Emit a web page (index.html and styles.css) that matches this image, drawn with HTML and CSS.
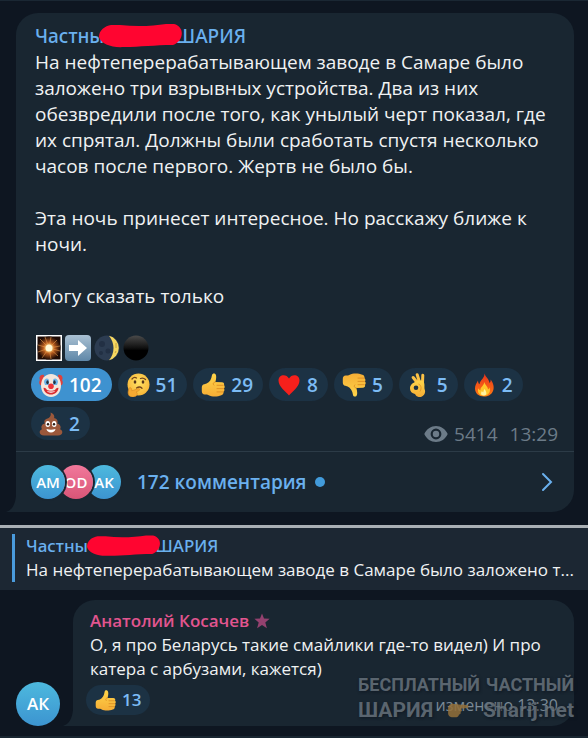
FILE: index.html
```html
<!DOCTYPE html>
<html lang="ru">
<head>
<meta charset="utf-8">
<meta name="viewport" content="width=device-width, initial-scale=1">
<title>Частный ШАРИЯ</title>
<link rel="stylesheet" href="styles.css">
</head>
<body>
<svg class="defs" aria-hidden="true">
  <defs>
    <linearGradient id="skin" x1="0" y1="0" x2="0" y2="1"><stop offset="0" stop-color="#ffd54a"/><stop offset="1" stop-color="#f5ad35"/></linearGradient>
    <radialGradient id="face" cx=".5" cy=".4" r=".6"><stop offset="0" stop-color="#ffe266"/><stop offset="1" stop-color="#f8b637"/></radialGradient>
    <radialGradient id="burst"><stop offset="0" stop-color="#fffbe0"/><stop offset=".22" stop-color="#ffd27a"/><stop offset=".5" stop-color="#b5591c"/><stop offset="1" stop-color="#1d0a05"/></radialGradient>
    <linearGradient id="steel" x1="0" y1="0" x2="0" y2="1"><stop offset="0" stop-color="#a9c0d2"/><stop offset="1" stop-color="#5f87a8"/></linearGradient>
    <linearGradient id="coal" x1="0" y1="0" x2="0" y2="1"><stop offset="0" stop-color="#4a4a4a"/><stop offset=".5" stop-color="#101010"/><stop offset=".6" stop-color="#000"/></linearGradient>
    <linearGradient id="flame" x1="0" y1="0" x2="0" y2="1"><stop offset="0" stop-color="#e8321c"/><stop offset="1" stop-color="#ff7a12"/></linearGradient>
    <symbol id="thumb" viewBox="0 0 24 24">
      <path fill="url(#skin)" d="M.8 14.500c0-2 1-3 2.500-3.200C6.500 10.800 9.300 8.500 10.300 5L11 2C11.400-.2 14.600-.2 15 2.300c.5 2.500 0 4.700-.7 6.700l6.700.2c1.700.1 2.600 1.500 1.900 2.900 1 .9 1.100 2.500.1 3.400.7 1.100.5 2.500-.5 3.200.3 1.700-.6 3.300-2.200 3.600-3.700 1.600-9.500 1.700-12.600 0-1.300-.8-2.500-.8-4-.8C1.800 21.500.8 20 .8 18z"/>
      <path fill="none" stroke="#d98720" stroke-width=".8" stroke-linecap="round" d="M14.300 9c-1.800.2-2.800 1.600-1.500 3.100M16 12.300h6.200M16 15.600h6.500M16 18.900h6"/>
    </symbol>
    <symbol id="star" viewBox="0 0 16 16"><path d="M8 .5l2 5 5.600.3-4.300 3.600 1.600 5.800L8 12l-4.900 3.200 1.600-5.800L.4 5.800 6 5.500z"/></symbol>
  </defs>
</svg>

<main class="chat">
  <article class="bubble post">
    <div class="post-body">
      <h1 class="author">
        <span>Частны</span>
        <svg class="scribble" viewBox="0 0 84 24" aria-hidden="true"><path d="M12 1h9c17 2 33 1 46-1h8c12 3 9 18-1 21-19 0-32 2-49 2-12 1-23-3-25-10C0 6 6 2 12 1z"/></svg>
        <span>ШАРИЯ</span>
      </h1>
      <p>На нефтеперерабатывающем заводе в Самаре было заложено три взрывных устройства. Два из них обезвредили после того, как унылый черт показал, где их спрятал. Должны были сработать спустя несколько часов после первого. Жертв не было бы.</p>
      <p>Эта ночь принесет интересное. Но расскажу ближе к ночи.</p>
      <p>Могу сказать только</p>
      <div class="emoji-line">
        <svg viewBox="0 0 26 26" aria-label="взрыв"><path fill="#fff" d="M0 0h26v26H0z"/><path fill="#1d0a05" d="M1.500 1.500h23v23h-23z"/><circle cx="13" cy="13" r="11.500" fill="url(#burst)"/><path stroke="#e89a4c" stroke-width=".6" d="M13 13L4 4m9 9l2-11m-2 11l8-8m-8 8l11-2m-11 2l9 8m-9-8l2 11m-2-11l-7 10m7-10L2 17m11-4L2 10m11 3L9 2m4 11l11 3"/><circle cx="13" cy="13" r="3.500" fill="#fff8d5"/></svg>
        <svg viewBox="0 0 26 26" aria-label="стрелка вправо"><rect width="26" height="26" rx="4" fill="url(#steel)"/><path fill="#fff" d="M4 10h9V5l9 8-9 8v-5H4z"/></svg>
        <svg viewBox="0 0 26 26" aria-label="луна"><circle cx="13" cy="13" r="12.500" fill="#2c3c51"/><path fill="#f7d75f" d="M15 .8a12.500 12.500 0 0 1 0 24.400c6-7 6-17 0-24.400z"/><g fill="#223044"><circle cx="8" cy="9" r="3"/><circle cx="14" cy="16" r="2.500"/><circle cx="7" cy="18" r="2"/></g><path fill="none" stroke="#b8933b" stroke-width=".8" d="M22 8v5m-1 5l1-2"/></svg>
        <svg viewBox="0 0 26 26" aria-label="чёрный круг"><circle cx="13" cy="13" r="12.500" fill="url(#coal)"/></svg>
      </div>
      <div class="footer">
        <button class="pill active" type="button">
          <svg viewBox="0 0 24 24" aria-hidden="true"><path fill="#e0413b" d="M5 2C1 1-.5 5 1 7c-2 3 0 6 3 6zm14 0c4-1 5.500 3 4 5 2 3 0 6-3 6z"/><path fill="#f3e6dc" d="M12 1c6 0 10 5 10 11.500S18 24 12 24 2 19 2 12.500 6 1 12 1z"/><path fill="#6db6ec" d="M5 9c0-4 5-5 5-1v4H6zm14 0c0-4-5-5-5-1v4h4z"/><ellipse cx="8.500" cy="9.300" rx="1.200" ry="2" fill="#26303b"/><ellipse cx="15.500" cy="9.300" rx="1.200" ry="2" fill="#26303b"/><path fill="#d92e31" d="M4.500 15c1-.5 2.500.5 3.500 2 2 1 6 1 8 0 1-1.500 2.500-2.500 3.500-2-.5 4-3.500 6.500-7.500 6.500S5 19 4.500 15z"/><path fill="#fff" d="M8 18c2 .8 6 .8 8 0-1 2.200-7 2.200-8 0z"/><circle cx="12" cy="13.300" r="2.800" fill="#ee3438"/></svg>
          <span>102</span>
        </button>
        <button class="pill" type="button">
          <svg viewBox="0 0 24 24" aria-hidden="true"><circle cx="12.500" cy="11.500" r="11" fill="url(#face)"/><path fill="none" stroke="#73451a" stroke-width="1.300" stroke-linecap="round" d="M6 6c1.500-1.700 3-2 4.500-1M14.500 5.500c2-.8 3.500-.4 5 1M10.500 15c2-1.300 4-1.300 5.500.2"/><ellipse cx="9" cy="9" rx="1.300" ry="1.800" fill="#55351a"/><ellipse cx="17" cy="9" rx="1.300" ry="1.800" fill="#55351a"/><path fill="#f6aa32" stroke="#d98921" stroke-width=".6" d="M3 15.500c1-1.500 2.500-.8 2.600.8l.2 1.500 6.500-2.200c1.700-.2 2 1.500.5 2.100L10 19c2 .5 1.800 4.500-2.500 5C3 24.500.7 21 3 15.500z"/></svg>
          <span>51</span>
        </button>
        <button class="pill" type="button"><svg viewBox="0 0 24 24" aria-hidden="true"><use href="#thumb"/></svg><span>29</span></button>
        <button class="pill" type="button">
          <svg viewBox="0 0 24 24" aria-hidden="true"><path fill="#f5201c" d="M12 22.500C9 18.500 1.500 14 1.500 7.500 1.500 1 9.500.5 12 5.500 14.500.5 22.500 1 22.500 7.500 22.500 14 15 18.500 12 22.500z"/></svg>
          <span>8</span>
        </button>
        <button class="pill" type="button"><svg class="flip" viewBox="0 0 24 24" aria-hidden="true"><use href="#thumb"/></svg><span>5</span></button>
        <button class="pill" type="button">
          <svg viewBox="0 0 24 24" aria-hidden="true"><g fill="none" stroke="#fcc246" stroke-width="3" stroke-linecap="round"><path d="M10.500 10L6.200 4.500M12.500 9l-2.300-7.200M15.500 10l.3-7.800"/></g><path fill="url(#skin)" d="M9 8.500c3-1.500 6.500-1.500 8 1 1 3-.2 5 1 8 .5 3-1 5.500-4 6.500-3 .6-5-1-6-3-3-.5-5-2.500-5-5.500 0-4 3-5.500 6-7z"/><circle cx="9" cy="14.800" r="2.300" fill="#1c3244"/><path fill="none" stroke="#d98720" stroke-width=".7" d="M11.500 11c2.500 1 3.500 4 1.500 7.500"/></svg>
          <span>5</span>
        </button>
        <button class="pill" type="button">
          <svg viewBox="0 0 24 24" aria-hidden="true"><path fill="url(#flame)" d="M12.500.5c1 4 4.500 5 5 9.500 1-.8 1.300-2 1-3.500 3 3.500 4 8 2.500 11.500-1.500 3.700-5 5.500-9 5.500-5 0-9-3-9-8 0-3 1.500-5.500 3-8 0 2 .5 3 1.500 3.800C8 7 12.500 5.500 12.500.5z"/><path fill="#ffc62b" d="M12.300 9c1 3.500 3.700 4.500 3.700 7.500 1-.4 1.300-1.200 1.300-2.200 2 4-.6 8.500-5.300 8.500S5 19.300 6.300 15.300c.5 1.200 1.200 1.700 2.200 1.900C8 14 12 13 12.300 9z"/><path fill="#fff3a0" d="M12.500 16c2 2.500 3.200 6.500-.7 6.500-3.700 0-2.800-3-1.800-4.500.2.800.7 1.200 1.300 1.200.2-1.200.6-2.200 1.200-3.200z"/></svg>
          <span>2</span>
        </button>
        <button class="pill" type="button">
          <svg viewBox="0 0 24 24" aria-hidden="true"><path fill="#9b583b" d="M11.500.5c3 1 4.500 3.500 3.500 5.500 3 .5 4.500 3 3.200 5.500 3 .6 4.300 3.500 2.800 5.800 4 1.700 2.500 6.200-2 6.200H5c-4.500 0-6-4.500-2-6.200C1.500 15 2.800 12 5.800 11.500 4.500 9 6 7 8.500 6.500c2-.5 4-2.500 3-6z"/><ellipse cx="8.800" cy="12" rx="2.300" ry="2.900" fill="#fff"/><ellipse cx="15.200" cy="12" rx="2.300" ry="2.900" fill="#fff"/><circle cx="9" cy="12.300" r="1.200" fill="#2c1c15"/><circle cx="15" cy="12.300" r="1.200" fill="#2c1c15"/><path fill="#fff" d="M7.500 17c3 1 6 1 9 0-.5 4.500-8.500 4.500-9 0z"/></svg>
          <span>2</span>
        </button>
        <div class="meta">
          <svg class="eye" viewBox="0 0 24 16" aria-hidden="true"><path fill="currentColor" fill-rule="evenodd" d="M12 0c5 0 9.500 3 11.700 8C21.500 13 17 16 12 16S2.500 13 .3 8C2.500 3 7 0 12 0zm0 2.600a5.400 5.400 0 1 0 0 10.800 5.400 5.400 0 0 0 0-10.800zm0 2.200a3.200 3.200 0 1 1 0 6.400 3.200 3.200 0 0 1 0-6.400z"/></svg>
          <span>5414</span><time>13:29</time>
        </div>
      </div>
    </div>
    <a class="comments" href="#discussion">
      <span class="avatars"><span class="avatar">AM</span><span class="avatar pink">OD</span><span class="avatar">AK</span></span>
      <span>172 комментария</span>
      <span class="dot"></span>
      <svg class="chevron" viewBox="0 0 12 20" aria-hidden="true"><path d="M2 2l8 8-8 8"/></svg>
    </a>
    <svg class="tail" viewBox="0 0 10 16" aria-hidden="true"><path d="M10 0v16H0c6-2 9-7 10-16z"/></svg>
  </article>

  <section class="discussion" id="discussion">
    <header class="pinned">
      <div class="pinned-content">
        <h2 class="author small">
          <span>Частны</span>
          <svg class="scribble" viewBox="0 0 84 24" aria-hidden="true"><path d="M12 1h9c17 2 33 1 46-1h8c12 3 9 18-1 21-19 0-32 2-49 2-12 1-23-3-25-10C0 6 6 2 12 1z"/></svg>
          <span>ШАРИЯ</span>
        </h2>
        <p>На нефтеперерабатывающем заводе в Самаре было заложено т...</p>
      </div>
    </header>
    <div class="message">
      <span class="avatar large">АК</span>
      <article class="bubble reply">
        <h3>Анатолий Косачев <svg class="star" aria-hidden="true"><use href="#star"/></svg></h3>
        <p>О, я про Беларусь такие смайлики где-то видел) И про катера с арбузами, кажется)</p>
        <div class="reply-footer">
          <button class="pill compact" type="button"><svg viewBox="0 0 24 24" aria-hidden="true"><use href="#thumb"/></svg><span>13</span></button>
          <span class="edited">изменено 13:30</span>
        </div>
        <svg class="tail" viewBox="0 0 10 16" aria-hidden="true"><path d="M10 0v16H0c6-2 9-7 10-16z"/></svg>
        <div class="watermark">
          <div><span>БЕСПЛАТНЫЙ</span><span>ЧАСТНЫЙ</span></div>
          <div class="brand"><span>ШАРИЯ</span><svg viewBox="0 0 24 20" aria-hidden="true"><path fill="#94703a" d="M1 8c0-3 2-5 5-5l7 1 9 .500c2.200.2 2.200 3 0 3.200l-7 .8c2 1 1.800 3-.2 3.500.8 1.800-.3 3-1.800 3.200-.2 2-2 2.800-4 2.800H5c-2.500 0-4-2-4-4z"/></svg><span>Sharij.net</span></div>
        </div>
      </article>
    </div>
  </section>
</main>
</body>
</html>
```
FILE: styles.css
```css
* { box-sizing: border-box; }

body {
  margin: 0;
  background: #0e1621;
  color: #f0f2f3;
  font: 19px/26px "Open Sans", "Noto Sans", sans-serif;
}

h1, h2, h3, p { margin: 0; font-size: inherit; }

.defs { position: absolute; width: 0; height: 0; }

.chat { border-top: 1px solid #1a2733; }

.bubble {
  position: relative;
  background: #192631;
  border-radius: 22px 22px 22px 0;
}

.post { margin: 12px 14px 13px 16px; }
.post-body { padding: 10px 16px 4px 19px; }
.post-body p { margin-bottom: 26px; }

.author {
  display: flex;
  align-items: center;
  color: #6ab0ee;
  font-family: "Noto Sans", sans-serif;
  font-weight: 500;
}

.scribble {
  position: relative;
  width: 84px;
  height: 24px;
  margin: 0 -8px 0 -5px;
  fill: #ff0530;
}

.emoji-line { display: flex; gap: 3px; height: 26px; padding-left: 1px; }
.emoji-line svg { width: 26px; height: 26px; }

.footer {
  display: flex;
  flex-wrap: wrap;
  align-items: flex-start;
  gap: 6px;
  margin: 7px 0 0 -4px;
}

.pill {
  display: flex;
  align-items: center;
  gap: 6px;
  height: 33px;
  padding: 0 10px 0 8px;
  border: 0;
  border-radius: 17px;
  background: #1c3244;
  color: #7cbcf5;
  font: inherit;
  font-weight: 600;
}

.pill svg { width: 24px; height: 24px; }
.pill.active { background: #3e92d0; color: #fff; }
.pill .flip { transform: scale(1, -1); }

.meta {
  display: flex;
  align-items: center;
  gap: 6px;
  margin-left: auto;
  padding-top: 14px;
  color: #6c7b88;
}

.meta time { margin-left: 6px; }
.eye { width: 24px; height: 16px; }

.comments {
  display: flex;
  align-items: center;
  height: 61px;
  padding: 0 21px 0 15px;
  border-top: 1px solid #2c3b47;
  color: #6ab0ee;
  font-weight: 600;
  text-decoration: none;
}

.avatars { display: flex; margin-right: 16px; }

.avatar {
  position: relative;
  z-index: 2;
  flex: none;
  width: 34px;
  height: 34px;
  border-radius: 50%;
  background: linear-gradient(#4db9de, #3c94d0);
  color: #fff;
  font-size: 15px;
  font-weight: 600;
  line-height: 34px;
  text-align: center;
}

.avatars .avatar { box-shadow: 0 0 0 2px #192631; }
.avatars .avatar + .avatar { z-index: 1; margin-left: -6px; }
.avatars .avatar:last-child { z-index: 0; }
.avatar.pink { background: linear-gradient(#f1789b, #d95577); }

.avatar.large {
  width: 44px;
  height: 44px;
  font-size: 17px;
  line-height: 44px;
}

.dot {
  width: 10px;
  height: 10px;
  margin-left: 8px;
  border-radius: 50%;
  background: #429bdb;
}

.chevron {
  width: 12px;
  height: 20px;
  margin-left: auto;
  fill: none;
  stroke: #6ab0ee;
  stroke-width: 2;
  stroke-linecap: round;
}

.tail {
  position: absolute;
  right: 100%;
  bottom: 0;
  width: 10px;
  height: 16px;
  fill: #192631;
}

.discussion {
  border-top: 3px solid #a9afb4;
  border-bottom: 2px solid #192631;
  font-size: 17px;
  line-height: 24px;
}

.pinned {
  padding: 6px 0 8px 12px;
  background: #1c2733;
}

.pinned-content {
  padding-left: 11px;
  border-left: 3px solid #4a9bdc;
}

.pinned p { overflow: hidden; white-space: nowrap; }

.small .scribble { width: 74px; height: 22px; margin: 0 -6px 0 -1px; }

.message {
  display: flex;
  align-items: flex-end;
  gap: 13px;
  padding: 10px 14px 10px 16px;
}

.reply { flex: 1; padding: 9px 16px 11px 17px; }

.reply h3 { color: #e2558f; font-weight: 600; }
.star { width: 16px; height: 16px; fill: #93416f; vertical-align: -2px; }

.reply-footer {
  display: flex;
  align-items: flex-end;
  justify-content: space-between;
  margin: 4px 0 0 -4px;
}

.pill.compact { height: 30px; padding: 0 9px; }
.compact svg { width: 21px; height: 21px; }
.edited { color: #7b8a96; font-size: 16px; line-height: 20px; }

.watermark {
  position: absolute;
  right: 0;
  bottom: 3px;
  width: 216px;
  color: #66717a;
  font-family: Roboto, sans-serif;
  font-size: 18px;
  font-weight: 700;
  text-shadow: 1px 1px 3px #0e1621;
  opacity: .85;
}

.watermark div {
  display: flex;
  align-items: center;
  justify-content: space-between;
}

.watermark .brand { font-size: 21px; line-height: 26px; }
.watermark svg { width: 22px; height: 18px; }
```
